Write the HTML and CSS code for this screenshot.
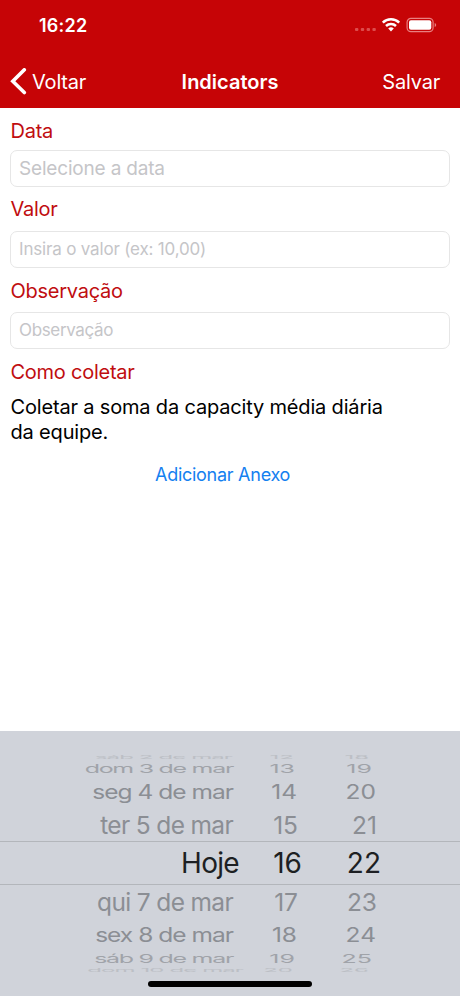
FILE: index.html
```html
<!DOCTYPE html>
<html lang="pt-BR">
<head>
    <meta charset="UTF-8">
    <meta name="viewport" content="width=device-width, initial-scale=1.0">
    <title>Indicators</title>
    <link rel="stylesheet" href="styles.css">
</head>
<body>
    <header class="header">
        <div class="status-bar">
            <span class="time">16:22</span>
            <svg class="status-icons" width="84" height="18" viewBox="0 0 84 18">
                <g fill="#dd4c4c">
                    <rect x="1" y="12" width="3.4" height="3" rx="1" />
                    <rect x="6.8" y="12" width="3.4" height="3" rx="1" />
                    <rect x="12.6" y="12" width="3.4" height="3" rx="1" />
                    <rect x="18.4" y="12" width="3.4" height="3" rx="1" />
                </g>
                <g fill="none" stroke="#fff" stroke-width="2.5">
                    <path d="M28.8 6.6a11.6 11.6 0 0 1 16.4 0" />
                    <path d="M32 10a7.1 7.1 0 0 1 10 0" />
                </g>
                <path d="M34.2 12.5a4 4 0 0 1 5.6 0L37 15.4z" fill="#fff" />
                <rect x="53.1" y="2.4" width="26" height="13.2" rx="3.8" fill="none" stroke="#e98080" stroke-width="1.2" />
                <rect x="55" y="4.3" width="22.3" height="9.4" rx="2" fill="#fff" />
                <path d="M80.7 7v4q1.5-.5 1.5-2t-1.5-2z" fill="#e98080" />
            </svg>
        </div>
        <nav class="nav">
            <a class="back">
                <svg width="18" height="28" viewBox="0 0 18 28">
                    <path d="M14.3 1.8 2.8 13.3l11.5 11.2" fill="none" stroke="#fff" stroke-width="3.6" stroke-linecap="round" />
                </svg>
                <span>Voltar</span>
            </a>
            <h1>Indicators</h1>
            <a class="save">Salvar</a>
        </nav>
    </header>

    <form class="form">
        <label for="data">Data</label>
        <input type="text" id="data" class="input-date" placeholder="Selecione a data" />

        <label for="valor" class="label-valor">Valor</label>
        <input type="text" id="valor" placeholder="Insira o valor (ex: 10,00)" />

        <label for="obs" class="label-obs">Observação</label>
        <input type="text" id="obs" placeholder="Observação" />

        <span class="label-how">Como coletar</span>
        <p>Coletar a soma da capacity média diária<br>da equipe.</p>
        <a class="attach">Adicionar Anexo</a>
    </form>

    <div class="picker">
        <div class="row far top"><span>sáb 2 de mar</span><span>12</span><span>18</span></div>
        <div class="row third top"><span>dom 3 de mar</span><span>13</span><span>19</span></div>
        <div class="row second top"><span>seg 4 de mar</span><span>14</span><span>20</span></div>
        <div class="row first top"><span>ter 5 de mar</span><span>15</span><span>21</span></div>
        <div class="row selected"><span>Hoje</span><span>16</span><span>22</span></div>
        <div class="row first"><span>qui 7 de mar</span><span>17</span><span>23</span></div>
        <div class="row second"><span>sex 8 de mar</span><span>18</span><span>24</span></div>
        <div class="row third"><span>sáb 9 de mar</span><span>19</span><span>25</span></div>
        <div class="row far last"><span>dom 10 de mar</span><span>20</span><span>26</span></div>
        <div class="home-bar"></div>
    </div>
</body>
</html>
```

FILE: styles.css
```css
* {
    box-sizing: border-box;
}
body {
    font-family: Inter, 'Liberation Sans', sans-serif;
    margin: 0;
    height: 996px;
    display: flex;
    flex-direction: column;
    background-color: #fff;
    overflow: hidden;
}
.header {
    height: 108px;
    background-color: #c60406;
    color: #fff;
}
.status-bar {
    height: 54px;
    display: flex;
    justify-content: space-between;
    align-items: center;
    padding: 0 22px 4px 39px;
}
.time {
    font-size: 18px;
    font-weight: 600;
    letter-spacing: 0.2px;
}
.nav {
    height: 54px;
    display: grid;
    grid-template-columns: 1fr auto 1fr;
    align-items: center;
    padding: 1px 10px 0;
    font-size: 20px;
    letter-spacing: -0.2px;
}
.back {
    display: flex;
    align-items: center;
    gap: 4px;
}
h1 {
    font-size: 20px;
    font-weight: 600;
    letter-spacing: 0;
    margin: 0;
}
.save {
    text-align: right;
    padding-right: 10px;
}
.form {
    flex: 1;
    display: flex;
    flex-direction: column;
    padding: 11px 10px 0;
}
label, .label-how {
    color: #c00d10;
    font-size: 20px;
    line-height: 24px;
    height: 24px;
    padding-left: 0.5px;
    letter-spacing: -0.25px;
}
.label-valor {
    margin-top: 10px;
}
.label-obs, .label-how {
    margin-top: 11px;
}
input {
    font-family: inherit;
    font-size: 17px;
    letter-spacing: -0.18px;
    height: 37px;
    margin: 10px 0 0;
    padding: 0 8px 1px;
    border: 1px solid #e6e6e6;
    border-radius: 7px;
}
.input-date {
    font-size: 19px;
    margin-top: 7px;
}
#obs {
    margin-top: 9px;
}
#obs::placeholder {
    letter-spacing: -0.35px;
}
input::placeholder {
    color: #c5c5c8;
}
p {
    color: #000;
    font-size: 20px;
    line-height: 24.5px;
    letter-spacing: -0.17px;
    margin: 11px 0 0 0.5px;
}
.attach {
    color: #1480f0;
    font-size: 18px;
    line-height: 22px;
    letter-spacing: -0.27px;
    margin: 20px 0 0 145px;
}
.picker {
    height: 265px;
    padding-top: 22px;
    background-color: #d0d3da;
}
.row {
    display: grid;
    grid-template-columns: 239px 63px 79px;
    grid-template-rows: 100%;
    align-items: center;
    text-align: right;
    white-space: nowrap;
    color: #8b8e94;
}
.row span {
    transform-origin: right center;
    line-height: 1;
}
.selected {
    height: 44px;
    border-top: 1px solid #b3b6bb;
    border-bottom: 1px solid #b3b6bb;
    font-size: 28px;
    color: #1d1f23;
}
.selected span:first-child {
    letter-spacing: -0.7px;
}
.first {
    height: 34px;
    font-size: 24.5px;
    grid-template-columns: 233px 65px 79px;
}
.first span:first-child {
    letter-spacing: -0.65px;
}
.first.top {
    padding-top: 2px;
}
.second {
    height: 32px;
    font-size: 24.5px;
    grid-template-columns: 233px 64px 79px;
}
.second span {
    transform: scaleY(0.8);
}
.second span:first-child {
    letter-spacing: -0.98px;
}
.second.top {
    padding-top: 2px;
}
.third {
    height: 15px;
    font-size: 25px;
    grid-template-columns: 233px 62px 77px;
    color: #a0a3a9;
}
.third span {
    transform: scaleY(0.48);
}
.third span:first-child {
    letter-spacing: -1.3px;
}
.third.top {
    padding-top: 2px;
}
.far {
    height: 7px;
    font-size: 24px;
    grid-template-columns: 232px 62px 75px;
    color: #bcbfc5;
}
.far span {
    transform: scaleY(0.2);
}
.far span:first-child {
    letter-spacing: -0.9px;
}
.last {
    grid-template-columns: 243px 50px 76px;
}
.home-bar {
    width: 164px;
    height: 6px;
    margin: 8px auto 0;
    border-radius: 3px;
    background-color: #000;
}
```
